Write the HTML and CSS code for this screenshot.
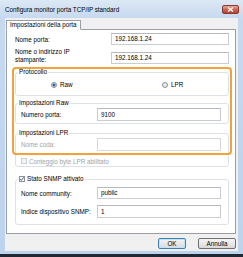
FILE: index.html
```html
<html>
<head>
  <meta charset="utf-8">
  <title>Configura monitor porta TCP/IP standard</title>
  <link rel="stylesheet" href="styles.css">
</head>
<body>
  <div class="window">
    <div class="titlebar">
      <span class="title">Configura monitor porta TCP/IP standard</span>
      <span class="close">
        <svg width="7" height="5" viewBox="0 0 7 5"><path d="M1 0.5 L6 4.5 M6 0.5 L1 4.5" stroke="#fff" stroke-width="1.3"/></svg>
      </span>
    </div>

    <div class="client">
      <div class="tabs"><span class="tab">Impostazioni della porta</span></div>

      <div class="panel">
        <div class="row">
          <label class="lbl-wide">Nome porta:</label>
          <span class="field">192.168.1.24</span>
        </div>
        <div class="row row-tall">
          <label class="lbl-wide">Nome o indirizzo IP<br>stampante:</label>
          <span class="field">192.168.1.24</span>
        </div>

        <fieldset class="group group-proto">
          <legend>Protocollo</legend>
          <div class="radios">
            <span class="option"><span class="radio on"></span>Raw</span>
            <span class="option"><span class="radio"></span>LPR</span>
          </div>
        </fieldset>

        <fieldset class="group group-raw">
          <legend>Impostazioni Raw</legend>
          <div class="row row-in">
            <label class="lbl">Numero porta:</label>
            <span class="field field-tall">9100</span>
          </div>
        </fieldset>

        <fieldset class="group group-lpr">
          <legend>Impostazioni LPR</legend>
          <div class="row row-in">
            <label class="lbl disabled">Nome coda:</label>
            <span class="field field-tall field-off"></span>
          </div>
          <div class="check-row disabled">
            <span class="check off"></span>Conteggio byte LPR abilitato
          </div>
        </fieldset>

        <fieldset class="group group-snmp">
          <legend><span class="check on"><svg width="4" height="4" viewBox="0 0 4 4"><path d="M0.3 2 L1.4 3.4 L3.7 0.3" fill="none" stroke="#2b4f82" stroke-width="0.9"/></svg></span>Stato SNMP attivato</legend>
          <div class="row row-snmp1">
            <label class="lbl">Nome community:</label>
            <span class="field">public</span>
          </div>
          <div class="row row-snmp2">
            <label class="lbl">Indice dispositivo SNMP:</label>
            <span class="field field-tall">1</span>
          </div>
        </fieldset>

        <div class="highlight"></div>
      </div>

      <div class="buttons">
        <button class="btn btn-ok">OK</button>
        <button class="btn btn-cancel">Annulla</button>
      </div>
    </div>
    <div class="taskbar"></div>
  </div>
</body>
</html>
```

FILE: styles.css
```css
body {
  margin: 0;
  font-family: 'Liberation Sans', Arial, sans-serif;
  font-size: 6.3px;
  color: #000;
  background-color: #1f2833;
}

.window {
  width: 243px;
  height: 257px;
  display: flex;
  flex-direction: column;
  background: linear-gradient(#dce8f5, #c6d9ef 18px, #bdd3ec);
}

.titlebar {
  height: 18px;
  flex: none;
  display: flex;
  align-items: center;
  justify-content: space-between;
  padding: 0 4px 0 5px;
}

.close {
  width: 17px;
  height: 9px;
  box-sizing: border-box;
  border: 1px solid #8b3a33;
  border-radius: 2px;
  background: linear-gradient(#e9a896, #cf6551 50%, #b9412f);
  display: flex;
  align-items: center;
  justify-content: center;
}

.client {
  flex: 1;
  margin: 0 5px 3px 5px;
  padding: 2px 2px 0 1px;
  background-color: #f0f0f0;
  display: flex;
  flex-direction: column;
}

.tabs {
  display: flex;
  height: 10px;
  margin-bottom: -1px;
  position: relative;
  z-index: 1;
}

.tab {
  height: 10px;
  box-sizing: border-box;
  border: 1px solid #9a9fa6;
  border-bottom-color: #fff;
  background-color: #fff;
  padding: 0 3px;
  line-height: 8px;
}

.panel {
  height: 205px;
  box-sizing: border-box;
  border: 1px solid #9a9fa6;
  background-color: #fff;
  padding: 3px 6px 0 8px;
  position: relative;
}

.row {
  display: flex;
  align-items: center;
}

.row-tall {
  margin-top: 3px;
  align-items: flex-end;
  line-height: 8px;
}

.lbl-wide {
  width: 96px;
  flex: none;
}

.lbl {
  width: 76px;
  flex: none;
}

.field {
  flex: 1;
  height: 12px;
  box-sizing: border-box;
  border: 1px solid #c9ccd1;
  border-top-color: #b5b8bd;
  background-color: #fff;
  padding-left: 3px;
  line-height: 10px;
}

.field-tall {
  height: 13px;
  line-height: 11px;
}

.field-off {
  border-color: #d6d8db;
}

.disabled {
  color: #a3a3a3;
}

/* group boxes */
.group {
  margin: 0;
  min-width: 0;
  border: 1px solid #dde2e6;
  border-radius: 3px;
  padding: 0 7px 0 5px;
}

.group legend {
  padding: 0 1px;
  margin-left: -3px;
  line-height: 8px;
  display: flex;
  align-items: center;
}

.group-proto {
  margin-top: 4px;
  padding-bottom: 6px;
}

.group-raw {
  margin-top: 3px;
  padding-bottom: 2px;
}

.group-lpr {
  margin-top: 5px;
  padding-bottom: 1px;
}

.group-snmp {
  margin-top: 8px;
  padding-bottom: 6px;
}

.row-in {
  margin-top: 1px;
}

.row-snmp1 {
  margin-top: 4px;
}

.row-snmp2 {
  margin-top: 6px;
}

.radios {
  margin-top: 4px;
  height: 9px;
  padding-left: 30px;
  display: grid;
  grid-template-columns: 111px auto;
  align-items: center;
}

.option {
  display: flex;
  align-items: center;
}

.radio {
  width: 6px;
  height: 6px;
  box-sizing: border-box;
  border: 1px solid #8d9095;
  border-radius: 50%;
  background: radial-gradient(circle, #f4f4f4, #d6d8db);
  margin-right: 3px;
}

.radio.on {
  background: radial-gradient(circle, #1f5aa0 0, #2f6db5 1.2px, #dfe5ec 1.8px);
}

.check-row {
  margin-top: 6px;
  height: 8px;
  display: flex;
  align-items: center;
}

.check {
  width: 6px;
  height: 6px;
  box-sizing: border-box;
  border: 1px solid #8d9095;
  background-color: #fff;
  margin-right: 2px;
  display: flex;
  align-items: center;
  justify-content: center;
}

.check.off {
  border-color: #cbcdd0;
  background-color: #f4f4f4;
}

.highlight {
  position: absolute;
  left: 5px;
  top: 37px;
  width: 220px;
  height: 88px;
  box-sizing: border-box;
  border: 2px solid #f2a23a;
  border-radius: 4px;
  pointer-events: none;
}

.buttons {
  margin-top: 4px;
  display: flex;
  justify-content: flex-end;
  gap: 12px;
}

.btn {
  height: 11px;
  box-sizing: border-box;
  padding: 0;
  font-family: inherit;
  font-size: 6.3px;
  line-height: 9px;
  color: #000;
  border: 1px solid #707070;
  border-radius: 2px;
  background: linear-gradient(#f3f3f3, #e8e8e8 50%, #d8d8d8);
}

.btn-ok {
  width: 28px;
  border-color: #3c7fb1;
  box-shadow: inset 0 0 0 1px #bfe3f7;
}

.btn-cancel {
  width: 38px;
}

.taskbar {
  height: 3px;
  flex: none;
  background-color: #1f2833;
}
```
